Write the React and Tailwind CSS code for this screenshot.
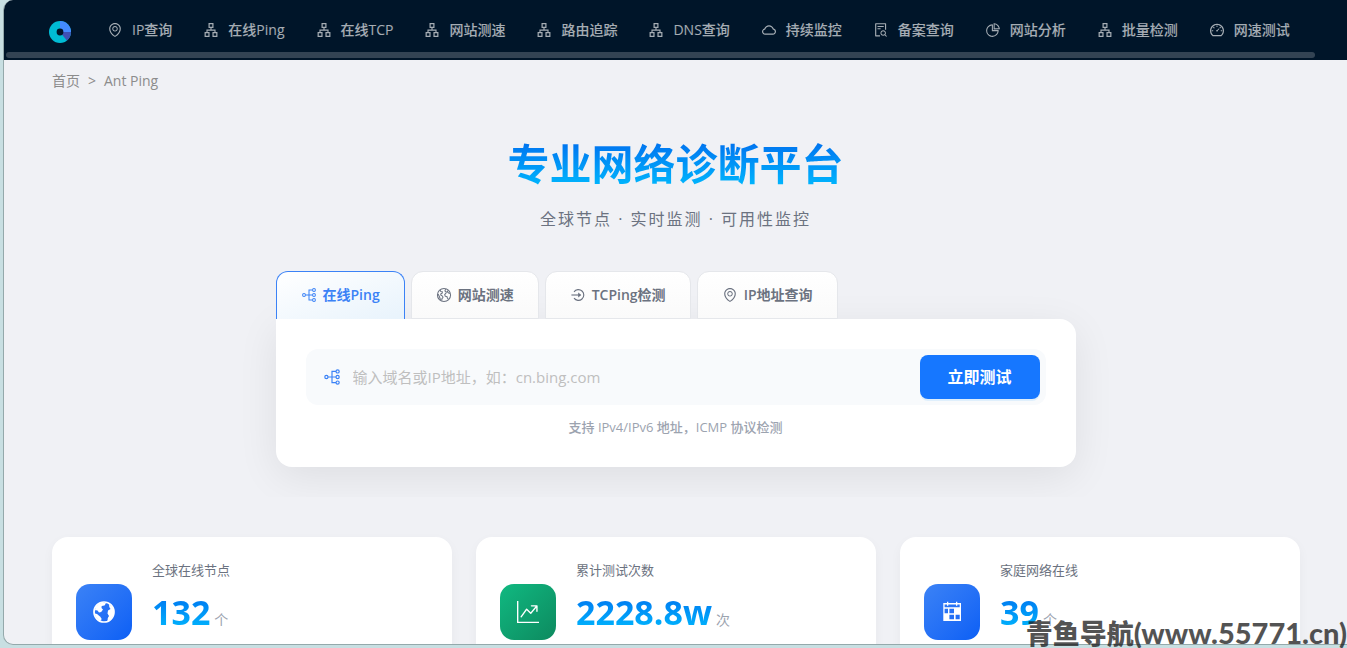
import {
  AiOutlineEnvironment,
  AiOutlineApartment,
  AiOutlineCloud,
  AiOutlineFileSearch,
  AiOutlinePieChart,
  AiOutlineDashboard,
} from "react-icons/ai";
import { BsGraphUpArrow } from "react-icons/bs";

const NAV = [
  { label: "IP查询", Icon: AiOutlineEnvironment },
  { label: "在线Ping", Icon: AiOutlineApartment },
  { label: "在线TCP", Icon: AiOutlineApartment },
  { label: "网站测速", Icon: AiOutlineApartment },
  { label: "路由追踪", Icon: AiOutlineApartment },
  { label: "DNS查询", Icon: AiOutlineApartment },
  { label: "持续监控", Icon: AiOutlineCloud },
  { label: "备案查询", Icon: AiOutlineFileSearch },
  { label: "网站分析", Icon: AiOutlinePieChart },
  { label: "批量检测", Icon: AiOutlineApartment },
  { label: "网速测试", Icon: AiOutlineDashboard },
];

const TABS = [
  { label: "在线Ping", Icon: PartitionIcon, active: true },
  { label: "网站测速", Icon: EarthOutlineIcon },
  { label: "TCPing检测", Icon: EnterIcon },
  { label: "IP地址查询", Icon: AiOutlineEnvironment },
];

const STATS = [
  { label: "全球在线节点", value: "132", unit: "个", Icon: EarthIcon, tile: "from-[#3b82f6] to-[#0b5ff5]" },
  { label: "累计测试次数", value: "2228.8w", unit: "次", Icon: BsGraphUpArrow, tile: "from-[#10b981] to-[#0d8a5f]" },
  { label: "家庭网络在线", value: "39", unit: "个", Icon: CalendarIcon, tile: "from-[#3b82f6] to-[#0b5ff5]" },
];

function Logo() {
  return (
    <svg viewBox="0 0 22 22" className="size-[22px]" aria-hidden="true">
      <circle cx="11" cy="11" r="11" fill="#00bcd4" />
      <path d="M11 11V0a11 11 0 0 1 11 11z" fill="#448aff" />
      <path d="M11 11h11a11 11 0 0 1-4.2 8.6z" fill="#3f51b5" />
      <circle cx="11" cy="11" r="3.4" fill="#001529" />
    </svg>
  );
}

function PartitionIcon({ className }) {
  return (
    <svg viewBox="0 0 17 17" className={className} fill="none" stroke="currentColor" strokeWidth="1.1" aria-hidden="true">
      <circle cx="3.200" cy="8.500" r="1.500" />
      <circle cx="13.800" cy="3.200" r="1.500" />
      <circle cx="13.800" cy="8.500" r="1.500" />
      <circle cx="13.800" cy="13.800" r="1.500" />
      <path d="M4.700 8.500h7.600M12.300 3.200H8.500v10.600h3.800" />
    </svg>
  );
}

function EnterIcon({ className }) {
  return (
    <svg viewBox="0 0 17 17" className={className} fill="none" stroke="currentColor" strokeWidth="1.2" aria-hidden="true">
      <path d="M4.300 5.200a5.700 5.700 0 1 1 0 6.600" />
      <path d="M1.500 8.500h9.200" />
      <path d="M8.700 5.800v5.400l3.300-2.700z" fill="currentColor" stroke="none" />
    </svg>
  );
}

function EarthOutlineIcon({ className }) {
  return (
    <svg
      viewBox="0 0 17 17"
      className={className}
      fill="none"
      stroke="currentColor"
      strokeWidth="1.1"
      strokeLinejoin="round"
      aria-hidden="true"
    >
      <circle cx="8.500" cy="8.500" r="7" />
      <path d="M4.600 3.300l.4 1.400 1.800.4-.3 1.500-1.500.8.2 1.300 1.800 1 .4 1.600-1.100 1-.2 2M2.200 7.500l1.500 2.900 1.100 3.200" />
      <path d="M10.200 2.300 9.500 4.200l1.500 1-.4 1.400-1.400 1.500.7 1.700 1.700.2.4 1.600.9 1.100M12.700 3.700l-.6 1.400 1.400 1.300 1.300.6" />
    </svg>
  );
}

function EarthIcon({ className }) {
  return (
    <svg viewBox="0 0 22 22" className={className} aria-hidden="true">
      <circle cx="11" cy="11" r="10" fill="none" stroke="currentColor" strokeWidth="1.700" />
      <path
        d="M3 5.500 6 2.500l4-1 3 .8-1.500 2.200-2.800.5L8.500 7 10 8.500 8.200 11 6 11.500 4.500 9.500 2 9z"
        fill="currentColor"
      />
      <path d="M1.500 12.500 4 13l3 2.500 1.500 2L8.200 20 5 18.500 2.500 15.500z" fill="currentColor" />
      <path
        d="M16 3l3 2.500 1.800 4L20.500 14 18 18l-3.500 2 .3-3 1.200-2-1.500-2.500.5-3 2.500-1.500-1.200-2z"
        fill="currentColor"
      />
    </svg>
  );
}

function CalendarIcon({ className }) {
  return (
    <svg viewBox="0 0 22 22" className={className} aria-hidden="true">
      <path
        fill="currentColor"
        fillRule="evenodd"
        d="M2.300 2H6V.7h1.300V2H15V.7h1.300V2H20v18H2.300zM3.600 3.600v2.700h15.100V3.600h-2.400v1.200H15V3.600H7.300v1.200H6V3.600zM3.600 7.800v4.500H7V7.800zM8.400 7.800v4.500H13V7.800zM8.400 13.700v4.600H13v-4.600zM14.600 13.700v4.600h4.100v-4.600z"
      />
    </svg>
  );
}

function Header() {
  return (
    <header className="flex h-[60px] shrink-0 flex-col bg-[#001529]">
      <div className="flex h-[52px] items-end gap-9 pr-6 pl-[45px]">
        <a href="#" aria-label="Ant Ping" className="mb-[9px] shrink-0">
          <Logo />
        </a>
        <nav className="mb-[11px] flex min-w-0 gap-[31px] overflow-hidden">
          {NAV.map(({ label, Icon }) => (
            <a
              key={label}
              href="#"
              className="flex shrink-0 items-center gap-[9px] text-sm/[22px] font-medium text-white/65"
            >
              <Icon className="size-4" />
              {label}
            </a>
          ))}
        </nav>
      </div>
      <div className="mr-8 ml-0.5 h-1.5 rounded-full bg-white/20" />
    </header>
  );
}

function Tab({ label, Icon, active }) {
  return (
    <button
      type="button"
      role="tab"
      aria-selected={Boolean(active)}
      className={
        active
          ? "flex h-12 items-center gap-1.5 rounded-t-xl border border-b-0 border-[#3b82f6] bg-linear-to-br from-white to-[#e8f3fc] px-6 pb-px text-sm font-semibold text-[#3b82f6]"
          : "flex h-12 items-center gap-1.5 rounded-t-xl border border-[#e5e7eb] bg-linear-to-b from-white to-[#fafafa] px-6 text-sm font-semibold text-[#6b7280]"
      }
    >
      <Icon className="size-4" />
      {label}
    </button>
  );
}

function Hero() {
  return (
    <section className="flex shrink-0 flex-col items-center overflow-hidden px-12 pt-[42px] pb-[30px]">
      <h1 className="bg-linear-to-b from-[#0064ec] to-[#00c2ff] bg-clip-text text-[42px]/[60px] font-bold text-transparent">
        专业网络诊断平台
      </h1>
      <p className="mt-[13px] text-base/6 tracking-[2px] text-[#6b7280]">全球节点 · 实时监测 · 可用性监控</p>
      <div className="mt-10 w-full max-w-[800px]">
        <div role="tablist" className="flex gap-1.5">
          {TABS.map((tab) => (
            <Tab key={tab.label} {...tab} />
          ))}
        </div>
        <form
          className="rounded-2xl rounded-tl-none bg-white p-[30px] shadow-[0_10px_40px_rgba(0,0,0,0.08)]"
          onSubmit={(e) => e.preventDefault()}
        >
          <div className="flex h-14 items-center rounded-xl bg-[#f8fafc] pr-1.5 pl-[17px]">
            <label htmlFor="host" aria-label="域名或IP地址">
              <PartitionIcon className="size-[18px] text-[#3b82f6]" />
            </label>
            <input
              id="host"
              type="text"
              placeholder="输入域名或IP地址，如：cn.bing.com"
              className="ml-3 min-w-0 flex-1 bg-transparent text-[15px] text-[#374151] outline-none placeholder:text-[#bfbfbf]"
            />
            <button
              type="submit"
              className="h-11 w-[120px] rounded-lg bg-[#1677ff] text-base font-bold text-white shadow-[0_2px_0_rgba(5,145,255,0.1)]"
            >
              立即测试
            </button>
          </div>
          <p className="mt-3 text-center text-[13px]/5 font-medium text-[#9ca3af]">
            支持 IPv4/IPv6 地址，ICMP 协议检测
          </p>
        </form>
      </div>
    </section>
  );
}

function StatCard({ label, value, unit, Icon, tile }) {
  return (
    <article className="flex min-h-[150px] items-center gap-5 rounded-2xl bg-white px-6 shadow-[0_4px_12px_rgba(0,0,0,0.04)]">
      <div className={`flex size-14 shrink-0 items-center justify-center rounded-[14px] bg-linear-to-br text-white ${tile}`}>
        <Icon className="size-[22px]" />
      </div>
      <div className="self-stretch py-6">
        <h2 className="text-[13px]/[18px] text-[#6b7280]">{label}</h2>
        <p className="mt-[9px] flex items-baseline gap-1">
          <span className="bg-linear-to-b from-[#0064ec] to-[#00c2ff] bg-clip-text text-[34px]/[48px] font-bold text-transparent">
            {value}
          </span>
          <span className="text-sm text-[#9ca3af]">{unit}</span>
        </p>
      </div>
    </article>
  );
}

export default function App() {
  return (
    <div className="relative h-screen overflow-hidden bg-[#c8dfe2] pb-[3px] pl-[3px] font-['Open_Sans','Noto_Sans_CJK_SC',sans-serif]">
      <div className="flex h-full flex-col overflow-hidden rounded-l-[10px] border-b border-l border-[#94a9ab] bg-[#f0f1f5]">
        <Header />
        <nav aria-label="breadcrumb" className="flex gap-2 px-12 pt-2.5 text-sm/[22px] text-[#8c8c8c]">
          <a href="#">首页</a>
          <span>&gt;</span>
          <span>Ant Ping</span>
        </nav>
        <Hero />
        <div className="grid shrink-0 grid-cols-3 gap-6 pt-10 pr-[47px] pl-12">
          {STATS.map((stat) => (
            <StatCard key={stat.label} {...stat} />
          ))}
        </div>
      </div>
      <div className="pointer-events-none absolute right-0 bottom-0 flex items-baseline whitespace-nowrap text-[#1a1a1a]/75">
        <span className="text-[27px]/7 font-black">青鱼导航</span>
        <span className="font-['Lato',sans-serif] text-[29px]/7 font-black">(www.55771.cn)</span>
      </div>
    </div>
  );
}
